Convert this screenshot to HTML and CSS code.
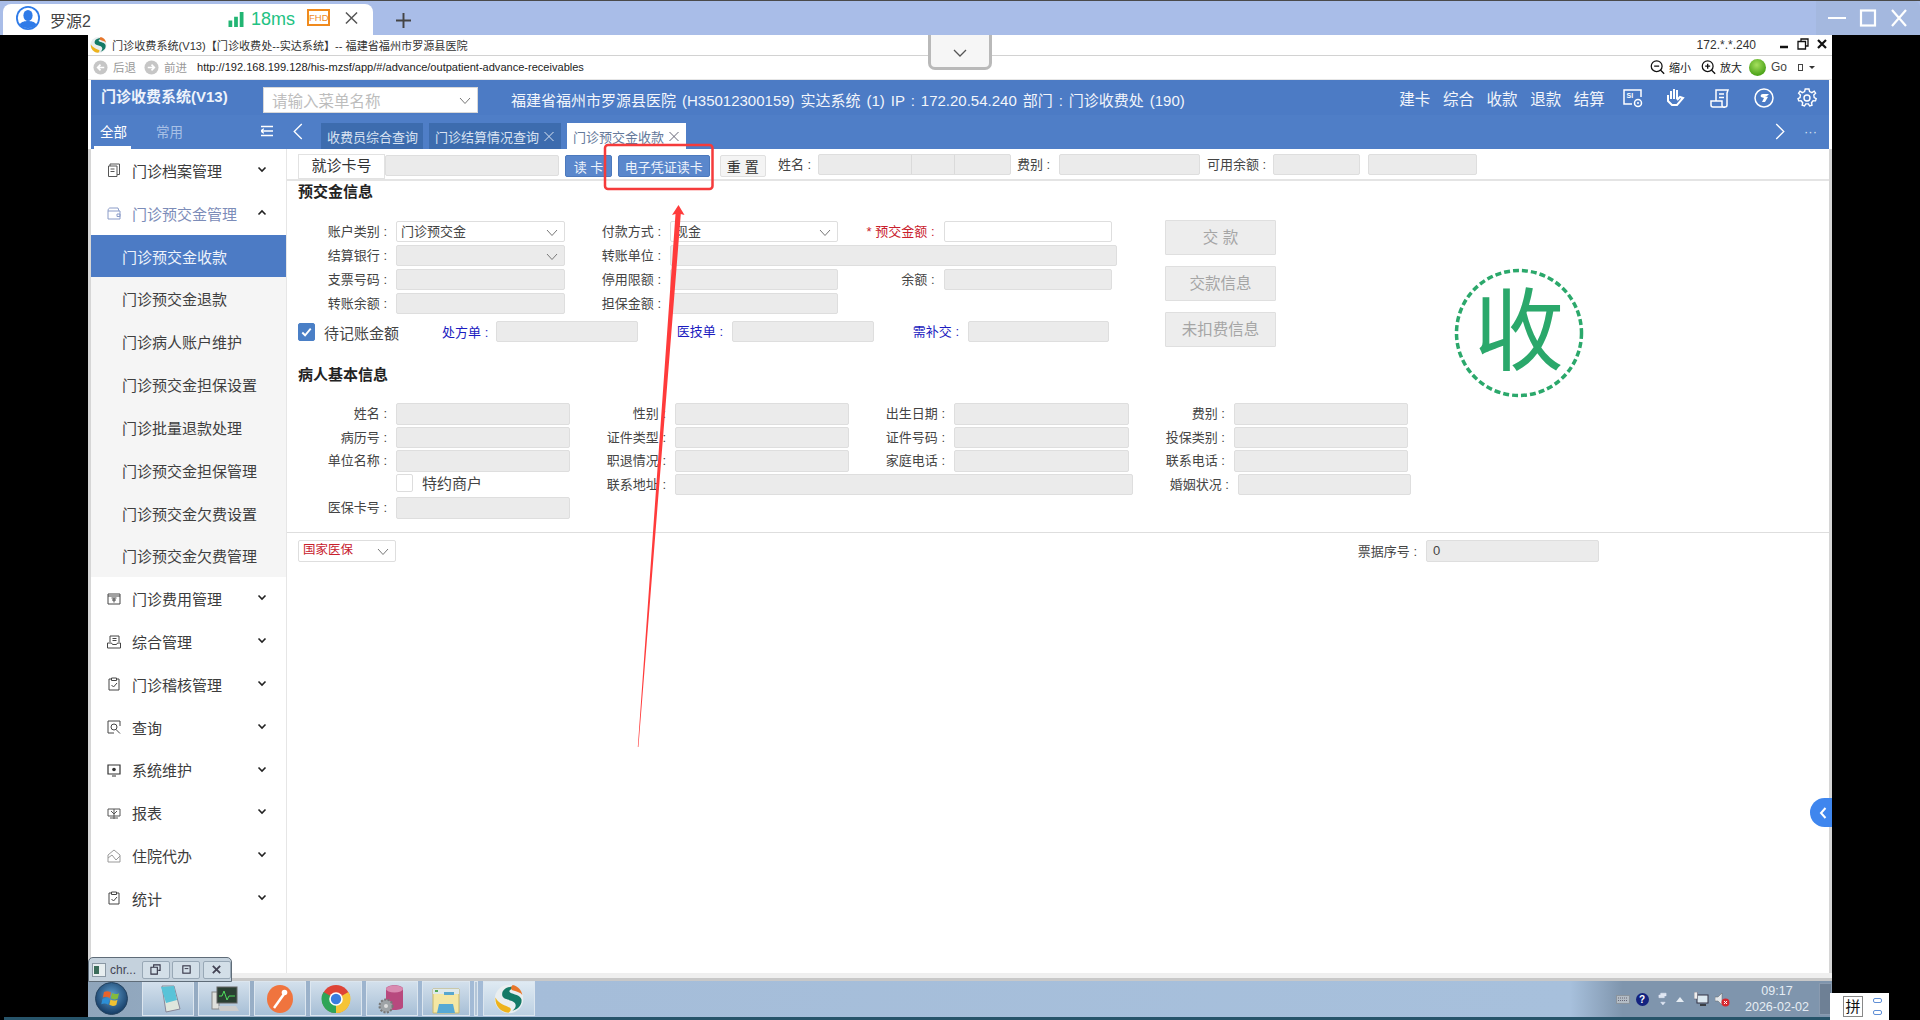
FILE: index.html
```html
<!DOCTYPE html>
<html lang="zh-CN">
<head>
<meta charset="utf-8">
<title>门诊预交金收款</title>
<link rel="stylesheet" href="styles.css">
</head>
<body>
<svg width="0" height="0" class="defs">
  <symbol id="logo" viewBox="0 0 20 20">
    <circle cx="10" cy="10" r="9.5" fill="#e9eef0"/>
    <path d="M15 1.800C9 1 4.500 4 5.600 8c.8 2.600 6.600 2.400 8.300 4.600 1.200 1.600.4 3.800-1.600 5.200 4-1 6.600-4 6-7.600-.6-3-5.400-3.200-7.600-4.600C9.200 4.600 11.500 3 15 1.800z" fill="#147a66"/>
    <path d="M12.500.6c3.600.8 6 3.600 6.400 6.800-1.200-1.800-3.800-2.200-6-3C11 3.800 11 2 12.500.6z" fill="#e8762a"/>
    <path d="M1 9c-.6 4.800 3 9.800 8.600 10.200 1.600-1 2-2.200 1.200-3.200C8 14.200 3 13.400 1 9z" fill="#eeb31c"/>
  </symbol>
  <symbol id="chev" viewBox="0 0 12 8"><path d="M1 1l5 5.500L11 1" fill="none" stroke="currentColor" stroke-width="1"/></symbol>
  <symbol id="mchev" viewBox="0 0 10 7"><path d="M1.500 1.500L5 5l3.500-3.500" fill="none" stroke="currentColor" stroke-width="1.600"/></symbol>
  <radialGradient id="orb-bg" cx="50%" cy="40%" r="60%"><stop offset="0" stop-color="#5f9fcf"/><stop offset="1" stop-color="#143a63"/></radialGradient>
</svg>

<header class="top-bar">
  <div class="conn-tab">
    <svg class="avatar" viewBox="0 0 24 24"><circle cx="12" cy="12" r="12" fill="#2f7be8"/><circle cx="12" cy="12" r="10.200" fill="#fff"/><ellipse cx="12" cy="9.500" rx="4.600" ry="5.600" fill="#2f7be8"/><path d="M3.500 18.500c2-3 5.500-3.500 8.500-3.500s6.500.5 8.500 3.500A10.200 10.200 0 0 1 12 22a10.200 10.200 0 0 1-8.500-3.500z" fill="#2f7be8"/></svg>
    <span class="conn-name">罗源2</span>
    <svg class="signal" viewBox="0 0 16 16"><path d="M0 9h4v7H0zM6 5h4v11H6zM12 0h4v16h-4z" fill="#22b573"/></svg>
    <span class="conn-ms">18ms</span>
    <span class="conn-fhd">FHD</span>
    <svg class="conn-close" viewBox="0 0 14 14"><path d="M1 1l12 12M13 1L1 13" stroke="#555" stroke-width="1.600"/></svg>
  </div>
  <svg class="conn-add" viewBox="0 0 14 14"><path d="M7 0v14M0 7h14" stroke="#444" stroke-width="1.800"/></svg>
  <div class="win-ctl">
    <svg viewBox="0 0 18 18"><path d="M0 9h18" stroke="#fff" stroke-width="2"/></svg>
    <svg viewBox="0 0 18 18"><rect x="2" y="1.500" width="14" height="15" fill="none" stroke="#fff" stroke-width="2.200"/></svg>
    <svg viewBox="0 0 18 18"><path d="M2 1l14 16M16 1L2 17" stroke="#fff" stroke-width="2.200"/></svg>
  </div>
</header>

<div class="stage">
  <div class="win">
    <div class="titlebar">
      <svg class="favicon"><use href="#logo"/></svg>
      <span class="title-text">门诊收费系统(V13)【门诊收费处--实达系统】-- 福建省福州市罗源县医院</span>
      <span class="title-ip">172.*.*.240</span>
      <svg class="tb-ctl" viewBox="0 0 12 12"><path d="M2 9h8" stroke="#111" stroke-width="2.500"/></svg>
      <svg class="tb-ctl" viewBox="0 0 12 12"><path d="M4 3V1h7v7H9M1 3.500h7.500V11H1z" fill="none" stroke="#111" stroke-width="1.300"/></svg>
      <svg class="tb-ctl" viewBox="0 0 12 12"><path d="M2 2l8 8M10 2l-8 8" stroke="#111" stroke-width="2.200"/></svg>
    </div>
    <div class="addrbar">
      <svg class="nav-round" viewBox="0 0 16 16"><circle cx="8" cy="8" r="7.500" fill="#c6c6c6"/><path d="M12 8H5M8 5L5 8l3 3" fill="none" stroke="#fff" stroke-width="1.800"/></svg>
      <span class="nav-label">后退</span>
      <svg class="nav-round nav-next" viewBox="0 0 16 16"><circle cx="8" cy="8" r="7.500" fill="#c6c6c6"/><path d="M4 8h7M8 5l3 3-3 3" fill="none" stroke="#fff" stroke-width="1.800"/></svg>
      <span class="nav-label">前进</span>
      <span class="url">http://192.168.199.128/his-mzsf/app/#/advance/outpatient-advance-receivables</span>
      <div class="zoom-tools">
        <svg class="zoom-ico" viewBox="0 0 18 18"><circle cx="8" cy="8" r="6.500" fill="none" stroke="#111" stroke-width="1.500"/><path d="M5 8h6M12.500 12.500L17 17" stroke="#111" stroke-width="1.600"/></svg>
        <span class="zoom-text">缩小</span>
        <svg class="zoom-ico zoom-gap" viewBox="0 0 18 18"><circle cx="8" cy="8" r="6.500" fill="none" stroke="#111" stroke-width="1.500"/><path d="M5 8h6M8 5v6M12.500 12.500L17 17" stroke="#111" stroke-width="1.600"/></svg>
        <span class="zoom-text">放大</span>
        <span class="go-dot"></span>
        <span class="go-text">Go</span>
        <span class="go-square"></span>
        <span class="go-caret"></span>
      </div>
    </div>

    <div class="app">
      <div class="app-head">
        <div class="brand">门诊收费系统(V13)</div>
        <div class="menu-search"><span>请输入菜单名称</span><svg class="chev-s"><use href="#chev"/></svg></div>
        <div class="app-info">福建省福州市罗源县医院 (H35012300159) 实达系统 (1) IP : 172.20.54.240 部门 : 门诊收费处 (190)</div>
        <nav class="quick">
          <span class="quick-cell">建卡</span>
          <span class="quick-cell">综合</span>
          <span class="quick-cell">收款</span>
          <span class="quick-cell">退款</span>
          <span class="quick-cell">结算</span>
          <span class="quick-cell"><svg class="quick-ico" viewBox="0 0 20 20"><path d="M18 9V2H1v14h8" fill="none" stroke="#fff" stroke-width="1.500"/><text x="3.500" y="10" class="si-text">SI</text><circle cx="15" cy="15" r="3.500" fill="none" stroke="#fff" stroke-width="1.500"/><circle cx="15" cy="15" r="1" fill="#fff"/></svg></span>
          <span class="quick-cell"><svg class="quick-ico" viewBox="0 0 20 20"><path d="M5 3v8M8 1v10M11 2v9M2 7v6l4 4h5l6-7-3-1-3 3" fill="none" stroke="#fff" stroke-width="2"/></svg></span>
          <span class="quick-cell"><svg class="quick-ico" viewBox="0 0 20 20"><path d="M6 13V2h12l-1 3v12a2 2 0 0 1-2 2H3a2 2 0 0 1-2-2v-4h11v4a2 2 0 0 0 3 2M9 6h5M9 9.500h5" fill="none" stroke="#fff" stroke-width="1.500"/></svg></span>
          <span class="quick-cell"><svg class="quick-ico" viewBox="0 0 20 20"><circle cx="10" cy="10" r="9" fill="none" stroke="#fff" stroke-width="1.500"/><path d="M15 6H9C7 6 6 7.500 7 9l3 1-2 4h3l3-5-3-1h2z" fill="#fff"/></svg></span>
          <span class="quick-cell"><svg class="quick-ico" viewBox="0 0 20 20"><path d="M10 1l2 0 .6 2.600 2.300 1 2.300-1.400 1.400 2-1.800 1.900.4 2.500 2 1-.7 2.300-2.400-.1-1.600 1.900.5 2.500-2.300.8-1.300-2.100h-2.600L7.500 18l-2.300-.8.500-2.500-1.600-1.900-2.400.1L1 10.600l2-1 .4-2.500L1.600 5.200l1.400-2 2.300 1.400 2.300-1L8.200 1z" fill="none" stroke="#fff" stroke-width="1.400"/><circle cx="10" cy="10" r="3" fill="none" stroke="#fff" stroke-width="1.400"/></svg></span>
        </nav>
      </div>
      <div class="app-tabs">
        <div class="side-tabs">
          <span class="side-tab side-tab-on">全部</span>
          <span class="side-tab">常用</span>
          <svg class="side-burger" viewBox="0 0 12 12"><path d="M0 1.500h12M3 6h9M0 10.500h12M0 6l2-1.500v3z" stroke="#fff" stroke-width="1.500" fill="#fff"/></svg>
        </div>
        <svg class="tab-arrow tab-prev" viewBox="0 0 10 18"><path d="M9 1L1 9l8 8" fill="none" stroke="#fff" stroke-width="1.400"/></svg>
        <div class="tabs">
          <span class="tab">收费员综合查询</span>
          <span class="tab">门诊结算情况查询<svg class="tab-x" viewBox="0 0 10 10"><path d="M.5.500l9 9M9.500.500l-9 9" stroke="#d7e1f0" stroke-width="1"/></svg></span>
          <span class="tab tab-on">门诊预交金收款<svg class="tab-x" viewBox="0 0 10 10"><path d="M.5.500l9 9M9.500.500l-9 9" stroke="#667" stroke-width="1"/></svg></span>
        </div>
        <svg class="tab-arrow tab-next" viewBox="0 0 10 18"><path d="M1 1l8 8-8 8" fill="none" stroke="#fff" stroke-width="1.400"/></svg>
        <span class="tab-more">···</span>
      </div>
      <div class="app-main">
        <aside class="side">
          <div class="m-item"><svg class="m-ico" viewBox="0 0 14 14"><path d="M3 3V1h9.500v10.500H10M1.500 3H10v10.500H1.500zM3.500 6h4M3.500 8.500h4" fill="none" stroke="#555" stroke-width="1"/></svg><span>门诊档案管理</span><svg class="m-chev"><use href="#mchev"/></svg></div>
          <div class="m-item m-open"><svg class="m-ico" viewBox="0 0 14 14"><path d="M1 5c0-2 1-3 2-3h8l1 3M1 5h12v8H1zM10 8h3v2.500h-3z" fill="none" stroke="#8b9cc8" stroke-width="1"/></svg><span>门诊预交金管理</span><svg class="m-chev m-up"><use href="#mchev"/></svg></div>
          <div class="sub">
            <div class="s-item s-on">门诊预交金收款</div>
            <div class="s-item">门诊预交金退款</div>
            <div class="s-item">门诊病人账户维护</div>
            <div class="s-item">门诊预交金担保设置</div>
            <div class="s-item">门诊批量退款处理</div>
            <div class="s-item">门诊预交金担保管理</div>
            <div class="s-item">门诊预交金欠费设置</div>
            <div class="s-item">门诊预交金欠费管理</div>
          </div>
          <div class="m-item"><svg class="m-ico" viewBox="0 0 14 14"><path d="M1 2h12v10H1zM1 4h12M4.500 6h5M7 6v4.500M5 8h4" fill="none" stroke="#444" stroke-width="1"/></svg><span>门诊费用管理</span><svg class="m-chev"><use href="#mchev"/></svg></div>
          <div class="m-item"><svg class="m-ico" viewBox="0 0 14 14"><path d="M3 7V1h9v6M.5 8h4l1 1.500h4L10.500 8h3v5h-13zM5.500 3.500h4M5.500 5.500h4" fill="none" stroke="#444" stroke-width="1"/></svg><span>综合管理</span><svg class="m-chev"><use href="#mchev"/></svg></div>
          <div class="m-item"><svg class="m-ico" viewBox="0 0 14 14"><path d="M4 2H2v11h10V2h-2M4.500 1h5v2.500h-5zM4.500 8l2 2 3.500-4" fill="none" stroke="#444" stroke-width="1"/></svg><span>门诊稽核管理</span><svg class="m-chev"><use href="#mchev"/></svg></div>
          <div class="m-item"><svg class="m-ico" viewBox="0 0 14 14"><path d="M13 6V1H1v12h6" fill="none" stroke="#444" stroke-width="1"/><circle cx="7" cy="7" r="3" fill="none" stroke="#444"/><path d="M9 9.500l4 4" stroke="#444"/></svg><span>查询</span><svg class="m-chev"><use href="#mchev"/></svg></div>
          <div class="m-item"><svg class="m-ico" viewBox="0 0 14 14"><path d="M1 2h12v9H1zM5 13h4" fill="none" stroke="#333" stroke-width="1.200"/><circle cx="7" cy="6.500" r="1.800" fill="#333"/></svg><span>系统维护</span><svg class="m-chev"><use href="#mchev"/></svg></div>
          <div class="m-item"><svg class="m-ico" viewBox="0 0 14 14"><path d="M1 3h12v7H1zM4 5l3 3 3-3M7 3v10M3 12h8" fill="none" stroke="#555" stroke-width="1"/></svg><span>报表</span><svg class="m-chev"><use href="#mchev"/></svg></div>
          <div class="m-item"><svg class="m-ico" viewBox="0 0 14 14"><path d="M1 13V6l6-5 6 5v7zM1 9l4-3 4 5 4-4" fill="none" stroke="#999" stroke-width="1"/></svg><span>住院代办</span><svg class="m-chev"><use href="#mchev"/></svg></div>
          <div class="m-item"><svg class="m-ico" viewBox="0 0 14 14"><path d="M4 2H2v11h10V2h-2M4.500 1h5v2.500h-5zM4.500 8l2 2 3.500-4" fill="none" stroke="#444" stroke-width="1"/></svg><span>统计</span><svg class="m-chev"><use href="#mchev"/></svg></div>
        </aside>
        <main class="content">
          <div class="toolbar">
            <span class="card-label">就诊卡号</span>
            <span class="field card-input"></span>
            <button class="btn btn-blue btn-read">读 卡</button>
            <button class="btn btn-blue btn-ecard">电子凭证读卡</button>
            <button class="btn btn-reset">重 置</button>
            <span class="tb-label tb-name">姓名 :</span>
            <span class="field name-field"><i class="seg seg-a"></i><i class="seg seg-b"></i><i class="seg seg-c"></i></span>
            <span class="tb-label tb-fee">费别 :</span>
            <span class="field fee-field"></span>
            <span class="tb-label tb-bal">可用余额 :</span>
            <span class="field bal-a"></span>
            <span class="field bal-b"></span>
          </div>

          <section class="pay">
            <div class="pay-left">
              <h2 class="sec-title">预交金信息</h2>
              <div class="grid-pay">
                <label class="lab">账户类别 :</label>
                <div class="field field-on sel">门诊预交金<svg class="chev-s"><use href="#chev"/></svg></div>
                <label class="lab">付款方式 :</label>
                <div class="field field-on sel">现金<svg class="chev-s"><use href="#chev"/></svg></div>
                <label class="lab lab-req">* 预交金额 :</label>
                <div class="field field-on"></div>

                <label class="lab">结算银行 :</label>
                <div class="field sel"><svg class="chev-s"><use href="#chev"/></svg></div>
                <label class="lab">转账单位 :</label>
                <div class="field span-wide"></div>

                <label class="lab">支票号码 :</label>
                <div class="field"></div>
                <label class="lab">停用限额 :</label>
                <div class="field"></div>
                <label class="lab">余额 :</label>
                <div class="field"></div>

                <label class="lab">转账余额 :</label>
                <div class="field"></div>
                <label class="lab">担保金额 :</label>
                <div class="field"></div>
              </div>
              <div class="grid-due">
                <div class="chk-cell"><span class="chk chk-on"><svg viewBox="0 0 16 16"><path d="M3.500 8.500l3 3 6-7" fill="none" stroke="#fff" stroke-width="2"/></svg></span><span class="chk-text">待记账金额</span><label class="lab lab-link lab-rx">处方单 :</label></div>
                <div class="field"></div>
                <label class="lab lab-link">医技单 :</label>
                <div class="field"></div>
                <label class="lab lab-link">需补交 :</label>
                <div class="field"></div>
              </div>
            </div>
            <div class="pay-btns">
              <button class="btn-off">交 款</button>
              <button class="btn-off">交款信息</button>
              <button class="btn-off">未扣费信息</button>
            </div>
            <svg class="stamp" viewBox="0 0 130 130"><circle cx="65" cy="65" r="62.500" fill="none" stroke="#2ba86b" stroke-width="3.500" stroke-dasharray="6 3"/><text x="65" y="95" class="stamp-text">收</text></svg>
          </section>

          <section class="patient">
            <h2 class="sec-title">病人基本信息</h2>
            <div class="grid-patient">
              <label class="lab">姓名 :</label><div class="field"></div>
              <label class="lab">性别 :</label><div class="field"></div>
              <label class="lab">出生日期 :</label><div class="field"></div>
              <label class="lab">费别 :</label><div class="field"></div>

              <label class="lab">病历号 :</label><div class="field"></div>
              <label class="lab">证件类型 :</label><div class="field"></div>
              <label class="lab">证件号码 :</label><div class="field"></div>
              <label class="lab">投保类别 :</label><div class="field"></div>

              <label class="lab">单位名称 :</label><div class="field"></div>
              <label class="lab">职退情况 :</label><div class="field"></div>
              <label class="lab">家庭电话 :</label><div class="field"></div>
              <label class="lab">联系电话 :</label><div class="field"></div>

              <span></span>
              <div class="chk-cell chk-merchant"><span class="chk"></span><span class="chk-text">特约商户</span></div>
              <label class="lab">联系地址 :</label>
              <div class="field span-addr"></div>
              <label class="lab lab-marry">婚姻状况 :</label>
              <div class="field field-marry"></div>

              <label class="lab">医保卡号 :</label><div class="field"></div>
            </div>
          </section>

          <section class="foot">
            <div class="field field-on sel sel-nat">国家医保<svg class="chev-s"><use href="#chev"/></svg></div>
            <label class="lab lab-bill">票据序号 :</label>
            <div class="field field-bill">0</div>
          </section>
        </main>
      </div>
    </div>

    <div class="band"></div>
    <footer class="taskbar">
      <svg class="orb" viewBox="0 0 33 33"><circle cx="16.500" cy="16.500" r="16" fill="url(#orb-bg)" stroke="#24425f"/><path d="M9 10c2.500-1.200 4.500-1 7 .5l-1.200 5.500c-2.400-1.400-4.400-1.600-7-.5z" fill="#e8632b"/><path d="M17 11c2.500 1.400 4.500 1.400 7 .2l-1.200 5.300c-2.500 1.200-4.500 1.200-7-.2z" fill="#84bb3d"/><path d="M7.500 16.800c2.600-1.100 4.500-.9 7 .5l-1.200 5.400c-2.400-1.400-4.400-1.600-7-.5z" fill="#2c8fd6"/><path d="M15.500 17.500c2.500 1.400 4.500 1.400 7 .2l-1.200 5.300c-2.500 1.200-4.500 1.200-7-.2z" fill="#f0c232"/></svg>
      <div class="t-btn"><svg viewBox="0 0 30 30"><path d="M9 2h12l6 23-14 3z" fill="#dfe6dd" stroke="#889"/><path d="M8 3l13-1 3 14-11 3z" fill="#59c3d8"/></svg></div>
      <div class="t-btn"><svg viewBox="0 0 30 30"><rect x="3" y="8" width="7" height="17" fill="#dfe0dc" stroke="#888"/><rect x="8" y="3" width="20" height="16" fill="#2a3f33" stroke="#666"/><path d="M10 12h3l2-5 3 9 2-4h6" fill="none" stroke="#4fdc5c"/><path d="M9 22h18l3 5H11z" fill="#ccc"/></svg></div>
      <div class="t-btn"><svg viewBox="0 0 30 30"><ellipse cx="15" cy="15" rx="13" ry="14" fill="#f0743e"/><path d="M9 24L19 10" stroke="#fff" stroke-width="2.500"/><circle cx="19.500" cy="8.500" r="2.800" fill="#fff"/></svg></div>
      <div class="t-btn"><svg viewBox="0 0 30 30"><circle cx="15" cy="15" r="14" fill="#de4437"/><path d="M15 15L27.500 8A14 14 0 0 1 15 29z" fill="#f6c437"/><path d="M15 15L15 29A14 14 0 0 1 2.500 8z" fill="#2fa557"/><circle cx="15" cy="15" r="6.800" fill="#fff"/><circle cx="15" cy="15" r="5.200" fill="#3b7de0"/></svg></div>
      <div class="t-btn"><svg viewBox="0 0 30 30"><path d="M9 5c0-5 17-5 17 0v18c0 4-17 4-17 0z" fill="#b8497e"/><ellipse cx="17.500" cy="5" rx="8.500" ry="3.500" fill="#d98ab0"/><circle cx="9" cy="22" r="6.500" fill="#9ea3a6" stroke="#777" stroke-dasharray="2 1.500" stroke-width="2"/><circle cx="9" cy="22" r="2" fill="#ddd"/></svg></div>
      <div class="t-btn t-last"><svg viewBox="0 0 30 30"><path d="M2 5h26v24H2z" fill="#f4e7a4" stroke="#c8b76c"/><path d="M2 5h26v5H2z" fill="#dfe9ea"/><path d="M4 6h3v2H4z" fill="#5a5"/><path d="M13 8h10v3H13z" fill="#58a7cf"/><path d="M8 20h14l2 9H6z" fill="#57a9d4"/></svg></div>
      <div class="t-sep"></div>
      <div class="t-btn t-active"><svg><use href="#logo"/></svg></div>
      <div class="tray">
        <svg class="tr-kbd" viewBox="0 0 14 10"><rect x=".5" y="1.500" width="13" height="8" fill="#b3bcc5" stroke="#8b949d"/><path d="M2 4h10M2 6.500h10" stroke="#667" stroke-dasharray="1 1"/></svg>
        <span class="tr-help">?</span>
        <svg class="tr-win" viewBox="0 0 10 16"><path d="M1 3h6v3H1zM3 3V1h6v3H7M3 11h5l-2.500 3z" fill="#dce6f0" stroke="#eef" stroke-width=".5"/></svg>
        <svg class="tr-up" viewBox="0 0 8 5"><path d="M4 0l4 5H0z" fill="#e4ebf2"/></svg>
        <svg class="tr-net" viewBox="0 0 15 15"><rect x="3" y="3" width="11" height="8" fill="#dbe8f0" stroke="#334"/><path d="M6 13h6" stroke="#222" stroke-width="1.500"/><rect x="0" y="0" width="3.500" height="7" fill="#eee" stroke="#667" stroke-width=".6"/></svg>
        <svg class="tr-vol" viewBox="0 0 15 15"><path d="M0 5h3l4-4v12l-4-4H0z" fill="#e4e8ec" stroke="#666" stroke-width=".5"/><circle cx="10.500" cy="10.500" r="4" fill="#d7272f"/><path d="M9 9l3 3M12 9l-3 3" stroke="#fff"/></svg>
        <div class="clock"><span>09:17</span><span>2026-02-02</span></div>
        <div class="show-desk"></div>
      </div>
    </footer>
  </div>
</div>

<div class="conn-popup">
  <svg class="pop-ico" viewBox="0 0 14 14"><rect x=".5" y=".5" width="13" height="13" fill="#e7eef0" stroke="#8a98a4"/><rect x="2" y="3" width="5" height="8" fill="#3b6c5a"/></svg>
  <span class="pop-text">chr...</span>
  <span class="pop-btn"><svg viewBox="0 0 12 12"><path d="M4 3V1h7v6H9M1 3.500h7V11H1z" fill="none" stroke="#334" stroke-width="1.200"/></svg></span>
  <span class="pop-btn"><svg viewBox="0 0 12 12"><rect x="2" y="2" width="8" height="8" fill="none" stroke="#334" stroke-width="1.200"/><path d="M4 5h4" stroke="#334"/></svg></span>
  <span class="pop-btn"><svg viewBox="0 0 12 12"><path d="M2 2l8 8M10 2l-8 8" stroke="#445" stroke-width="2"/></svg></span>
</div>
<div class="drop-handle"><svg viewBox="0 0 14 8"><path d="M1 1l6 6 6-6" fill="none" stroke="#555" stroke-width="1.300"/></svg></div>
<div class="side-toggle"><svg viewBox="0 0 8 12"><path d="M6.500 1L2 6l4.500 5" fill="none" stroke="#fff" stroke-width="2"/></svg></div>
<div class="ime"><span class="ime-key">拼</span><span class="ime-dots"><i></i><i></i></span></div>

<svg class="annot" viewBox="0 0 1920 1020">
  <rect x="605" y="145" width="107.500" height="44" rx="3" fill="none" stroke="#f53b3b" stroke-width="2.500"/>
  <polygon points="678.500,205 684.500,215 680.800,214 638.400,747 637.800,747 675.500,214 672,215" fill="#ff3b3b"/>
</svg>
</body>
</html>
```

FILE: styles.css
```css
* { box-sizing: border-box; }
html, body { margin: 0; padding: 0; }
body {
  width: 1920px;
  height: 1020px;
  overflow: hidden;
  background: #000;
  color: #333;
  font-family: "Liberation Sans", "Noto Sans CJK SC", sans-serif;
  font-size: 13px;
  position: relative;
}
.defs { position: absolute; }
svg { display: block; flex: none; }

/* remote client top bar */
.top-bar {
  height: 35px;
  background: #a9bde8;
  border-top: 1px solid #4a4a4a;
  display: flex;
  align-items: flex-end;
  padding-left: 3px;
}
.conn-tab {
  width: 370px;
  height: 31px;
  background: #fff;
  border-radius: 8px 8px 0 0;
  display: flex;
  align-items: center;
  padding-left: 13px;
}
.avatar { width: 24px; height: 24px; margin-top: -3px; }
.conn-name { font-size: 16px; margin-left: 10px; width: 39px; color: #444; white-space: nowrap; }
.signal { width: 16px; height: 15px; margin-left: 139px; margin-top: -1px; }
.conn-ms { font-size: 18px; color: #22c283; margin-left: 7px; width: 41px; }
.conn-fhd {
  margin-left: 15px;
  width: 23px;
  height: 17px;
  border: 2px solid #f08a1d;
  color: #f08a1d;
  font-size: 9.500px;
  line-height: 13px;
  text-align: center;
  margin-top: -4px;
}
.conn-close { width: 13px; height: 14px; margin-left: 15px; margin-top: -3px; }
.conn-add { width: 15px; height: 15px; margin-left: 23px; margin-bottom: 7px; }
.win-ctl {
  margin-left: auto;
  width: 104px;
  height: 34px;
  background: #a4b8df;
  display: flex;
  align-items: center;
  justify-content: space-around;
  padding: 0 6px;
  border-radius: 0 6px 0 0;
}
.win-ctl svg { width: 18px; height: 18px; }

/* remote window */
.stage { padding-left: 88px; height: 985px; }
.stage::before {
  content: "";
  position: absolute;
  left: 4px;
  bottom: 0;
  width: 84px;
  height: 3px;
  background: #27546a;
}
.win { width: 1744px; height: 985px; background: #fff; display: flex; flex-direction: column; }
.titlebar {
  height: 21px;
  flex: none;
  border-bottom: 1px solid #d2d2d2;
  display: flex;
  align-items: center;
  padding: 0 4px 0 2px;
}
.favicon { width: 17px; height: 18px; }
.title-text { font-size: 11.100px; margin-left: 5px; color: #333; white-space: nowrap; }
.title-ip { font-size: 12px; margin-left: auto; margin-right: 15px; color: #333; }
.tb-ctl { width: 12px; height: 12px; margin-left: 7px; margin-top: -2px; }

.addrbar {
  height: 24px;
  flex: none;
  display: flex;
  align-items: center;
  padding: 0 17px 1px 5px;
  border-bottom: 1px solid #e6e6e6;
}
.nav-round { width: 15px; height: 15px; }
.nav-next { margin-left: 9px; }
.nav-label { font-size: 11.500px; color: #999; margin-left: 5px; width: 22px; white-space: nowrap; }
.url { font-size: 11.050px; color: #222; margin-left: 11px; white-space: nowrap; }
.zoom-tools { margin-left: auto; display: flex; align-items: center; }
.zoom-ico { width: 15px; height: 16px; }
.zoom-gap { margin-left: 10px; }
.zoom-text { font-size: 11px; margin-left: 4px; color: #222; white-space: nowrap; }
.go-dot {
  width: 17px;
  height: 17px;
  margin-left: 7px;
  border-radius: 50%;
  background: radial-gradient(circle at 45% 35%, #a6e05e, #4ea41a 70%);
}
.go-text { font-size: 12px; color: #444; margin-left: 5px; }
.go-square { width: 5px; height: 7px; border: 1px solid #444; margin-left: 11px; }
.go-caret { border: 3px solid transparent; border-top: 3px solid #333; border-bottom: 0; margin-left: 6px; }

.drop-handle {
  position: absolute;
  left: 928px;
  top: 35px;
  width: 64px;
  height: 35px;
  background: #f6f6f6;
  border: 3px solid #b9b9b9;
  border-top: 0;
  border-radius: 0 0 7px 7px;
  display: flex;
  align-items: center;
  justify-content: center;
}
.drop-handle svg { width: 14px; height: 8px; margin-top: 3px; }

.app { flex: none; height: 893px; margin: 0 3px; display: flex; flex-direction: column; position: relative; }
.app-head {
  height: 35px;
  flex: none;
  background: #4c7bc5;
  display: flex;
  align-items: center;
  color: #fff;
  padding-left: 10px;
  padding-top: 1px;
}
.brand { width: 131px; font-size: 15px; font-weight: bold; white-space: nowrap; margin-top: -5px; color: #eef3fb; }
.menu-search {
  width: 215px;
  height: 26px;
  margin-left: 31px;
  margin-top: 3px;
  background: #fff;
  border: 1px solid #d8d8d8;
  color: #bdbdbd;
  font-size: 15.500px;
  padding-left: 8px;
  display: flex;
  align-items: center;
  position: relative;
}
.chev-s { width: 12px; height: 8px; color: #777; position: absolute; right: 6px; top: 50%; margin-top: -3px; }
.app-info { margin-left: 33px; font-size: 15px; word-spacing: 1.800px; white-space: nowrap; margin-top: 3px; color: #f2f5fb; }
.quick { margin-left: auto; display: flex; }
.quick-cell {
  width: 43.600px;
  font-size: 15.500px;
  display: flex;
  justify-content: center;
  align-items: center;
  color: #f2f5fb;
  margin-top: -1px;
}
.quick-ico { width: 20px; height: 20px; }
.si-text { font-size: 7px; font-weight: bold; fill: #fff; }

.app-tabs { height: 34px; flex: none; background: #4f7ec7; display: flex; align-items: flex-end; position: relative; }
.side-tabs { width: 195px; height: 34px; display: flex; align-items: center; position: relative; flex: none; }
.side-tab { font-size: 13.500px; color: #a8c0e6; margin-left: 29px; margin-top: -3px; white-space: nowrap; }
.side-tab:first-child { margin-left: 9px; }
.side-tab-on { color: #fff; position: relative; }
.side-tab-on::after {
  content: "";
  position: absolute;
  left: -6px;
  right: -4px;
  top: 25px;
  height: 3px;
  background: #fff;
}
.side-burger { width: 12px; height: 12px; margin-left: 78px; margin-top: -3px; }
.tab-arrow { width: 10px; height: 17px; }
.tab-prev { margin: 0 0 9px 7px; }
.tab-next { margin: 0 0 9px auto; }
.tabs { display: flex; margin-left: 18px; }
.tab {
  height: 26px;
  background: #3d6cae;
  color: #d9e3f2;
  font-size: 13px;
  display: flex;
  align-items: center;
  padding: 0 6px;
  margin-right: 6px;
  white-space: nowrap;
}
.tab:nth-child(1) { width: 102px; }
.tab:nth-child(2) { width: 132px; }
.tab-on { width: 119px; background: #fff; color: #65799a; }
.tab-x { width: 10px; height: 11px; margin-left: 5px; }
.tab-more { color: #d6e0f0; font-size: 13px; margin: 0 12px 10px 19px; }

.app-main {
  flex: 1;
  display: flex;
  min-height: 0;
  background: #fff;
  box-shadow: -3px 0 0 #d6d6d6, 3px 0 0 #d6d6d6;
}
.side { width: 196px; flex: none; border-right: 1px solid #e6e6e6; }
.m-item {
  height: 42.800px;
  display: flex;
  align-items: center;
  padding-left: 16px;
  font-size: 15px;
  color: #3c3c3c;
  position: relative;
  white-space: nowrap;
}
.m-ico { width: 14px; height: 14px; margin-right: 11px; }
.m-chev { width: 10px; height: 7px; position: absolute; left: 166px; top: 17px; color: #222; }
.m-up { transform: rotate(180deg); }
.m-open { color: #7c8cb8; }
.sub { background: #f5f5f5; }
.s-item {
  height: 42.850px;
  display: flex;
  align-items: center;
  padding-left: 31px;
  font-size: 15px;
  color: #3f3f3f;
  white-space: nowrap;
}
.s-on { background: #4c7bc5; color: #eef3fb; }

.content { flex: 1; min-width: 0; }
.toolbar {
  height: 32px;
  border-bottom: 2px solid #e4e4e4;
  display: flex;
  align-items: flex-start;
  padding: 5px 0 0 11px;
}
.field {
  display: block;
  height: 21px;
  background: #ebebeb;
  border: 1px solid #dedede;
  border-radius: 2px;
  position: relative;
  font-size: 13px;
  line-height: 19px;
  padding-left: 4px;
  color: #444;
  flex: none;
}
.field-on { background: #fff; }
.card-label {
  width: 87px;
  height: 25px;
  border: 1px solid #e2e2e2;
  font-size: 15px;
  text-align: center;
  line-height: 22px;
  color: #333;
  background: #fff;
}
.card-input { width: 174px; margin-top: 1px; }
.btn {
  height: 22px;
  border-radius: 2px;
  font: inherit;
  padding: 0;
  margin-top: 1px;
  flex: none;
  cursor: default;
}
.btn-blue { background: #5a87cc; border: 1px solid #4c79bd; color: #eef3fb; font-size: 13px; }
.btn-read { width: 47px; margin-left: 6px; }
.btn-ecard { width: 91.500px; margin-left: 6px; }
.btn-reset { width: 46.500px; margin-left: 10px; background: #f4f4f4; border: 1px solid #e0e0e0; color: #333; font-size: 14px; }
.tb-label { font-size: 13px; white-space: nowrap; color: #444; line-height: 21px; }
.tb-name { margin-left: 12px; width: 40px; }
.name-field { width: 193px; display: flex; padding: 0; }
.seg { display: block; height: 100%; border-right: 1px solid #dadada; }
.seg-a { width: 92.500px; }
.seg-b { width: 43px; }
.seg-c { flex: 1; border: 0; }
.tb-fee { margin-left: 6px; width: 42px; }
.fee-field { width: 141px; }
.tb-bal { margin-left: 7px; width: 66px; }
.bal-a { width: 87px; }
.bal-b { width: 109px; margin-left: 8px; }

.sec-title { font-size: 15px; font-weight: bold; color: #222; margin: 0; padding-left: 11px; height: 22px; line-height: 22px; }
.lab { font-size: 13px; color: #444; text-align: right; line-height: 21px; white-space: nowrap; margin-right: 9px; }
.lab-req { color: #c9202c; }
.lab-link { color: #1c1cc0; }
.lab-rx { margin: 0 0 0 43px; }

.pay { display: flex; height: 183px; align-items: flex-start; }
.pay-left { width: 825px; flex: none; }
.grid-pay {
  display: grid;
  grid-template-columns: 109px 168.500px 105.500px 168px 105.500px 168px;
  grid-auto-rows: 24px;
  margin-top: 18px;
}
.grid-pay .field, .grid-patient .field { align-self: start; }
.span-wide { grid-column: span 3; width: 447px; }
.sel { position: relative; }
.grid-due {
  display: grid;
  grid-template-columns: 209px 142px 94px 142px 94px 141px;
  height: 22px;
  margin-top: 4px;
}
.chk-cell { display: flex; align-items: center; padding-left: 11px; white-space: nowrap; }
.chk {
  width: 17px;
  height: 18px;
  border: 1px solid #ddd;
  border-radius: 2px;
  background: #fff;
  flex: none;
}
.chk-on { background: #4a7fc6; border-color: #4a7fc6; }
.chk-on svg { width: 15px; height: 16px; }
.chk-text { font-size: 15px; margin-left: 9px; color: #444; white-space: nowrap; }
.pay-btns { margin-left: 53px; margin-top: 39px; display: flex; flex-direction: column; gap: 11px; flex: none; }
.btn-off {
  width: 111px;
  height: 35px;
  background: #ededed;
  border: 1px solid #dfdfdf;
  border-radius: 1px;
  color: #a5a5a5;
  font: inherit;
  font-size: 15.500px;
  padding: 0 0 4px;
}
.stamp { width: 130px; height: 130px; margin: 87px 0 0 178px; }
.stamp-text { font-size: 90px; fill: #2ba86b; text-anchor: middle; }

.patient { height: 168px; margin-top: 0; }
.grid-patient {
  display: grid;
  grid-template-columns: 109px 174px 105px 174px 105px 174.600px 105.400px 174px;
  grid-auto-rows: 23.600px;
  margin-top: 17px;
}
.grid-patient .field { height: 21.500px; }
.chk-merchant { padding-left: 0; align-items: flex-start; }
.chk-merchant .chk-text { margin-left: 9px; line-height: 20px; }
.span-addr { grid-column: span 3; width: 457.500px; }
.lab-marry { margin-right: 5px; }
.field-marry { margin-left: 4px; width: 173px; }

.foot {
  border-top: 1px solid #dedede;
  padding: 7px 0 0 11px;
  display: flex;
  align-items: flex-start;
}
.sel-nat { width: 97.500px; height: 22px; color: #c7202c; font-size: 12.500px; }
.lab-bill { width: 1021.500px; flex: none; line-height: 24px; }
.field-bill { width: 173px; height: 22px; padding-left: 6px; }

.band { height: 8px; flex: none; background: linear-gradient(#efefef 0 5px, #c8c8c8 5px 100%); }
.taskbar {
  height: 39px;
  flex: none;
  border-bottom: 3px solid #27546a;
  background: linear-gradient(90deg, #8fa5bb 0, #a5bdd9 25%, #a7c0dc 85%, #7f95ad 88%, #7f95ad 100%);
  display: flex;
  padding-left: 53.500px;
  position: relative;
}
.orb { position: absolute; left: 7px; top: 1px; width: 33px; height: 33px; }
.t-btn {
  width: 52.500px;
  height: 35px;
  margin-right: 3.600px;
  background: linear-gradient(#d3e0ec, #a7bfd6);
  border: 1px solid #dce6ef;
  display: flex;
  align-items: center;
  justify-content: center;
  flex: none;
}
.t-last { width: 48px; }
.t-btn svg { width: 30px; height: 30px; }
.t-active { background: linear-gradient(#dfeaf3, #bcd0e2); }
.t-sep { width: 4px; height: 35px; margin-right: 5px; background: #b4c6d8; border: 1px solid #dce6ef; flex: none; }
.tray { margin-left: auto; display: flex; align-items: center; height: 36px; position: relative; }
.tr-kbd { width: 14px; height: 10px; }
.tr-help {
  width: 13px;
  height: 13px;
  margin-left: 6px;
  border-radius: 50%;
  background: #13227f;
  color: #fff;
  font-size: 10px;
  font-weight: bold;
  text-align: center;
  line-height: 13px;
}
.tr-win { width: 9px; height: 15px; margin-left: 9px; }
.tr-up { width: 8px; height: 5px; margin-left: 9px; }
.tr-net { width: 15px; height: 15px; margin-left: 10.500px; }
.tr-vol { width: 15px; height: 15px; margin-left: 6px; }
.clock {
  width: 72px;
  margin-left: 11px;
  display: flex;
  flex-direction: column;
  align-items: center;
  color: #e6edf4;
  font-size: 12.500px;
  line-height: 16px;
}
.show-desk { width: 13px; height: 32px; margin-left: 6px; background: #6e8095; border: 1px solid #8a9bb0; }

/* overlays */
.conn-popup {
  position: absolute;
  left: 88px;
  top: 957px;
  width: 144px;
  height: 25px;
  background: #c5d2dd;
  border: 1px solid #5f6c78;
  border-radius: 5px 5px 0 0;
  display: flex;
  align-items: center;
  padding-left: 3px;
}
.pop-ico { width: 14px; height: 14px; }
.pop-text { font-size: 12px; margin-left: 4px; width: 29px; color: #445; white-space: nowrap; }
.pop-btn {
  width: 28px;
  height: 18px;
  border: 1px solid #98a8b6;
  border-radius: 2px;
  margin-left: 2.500px;
  background: #d3dfe8;
  display: flex;
  align-items: center;
  justify-content: center;
}
.pop-btn svg { width: 11px; height: 11px; }
.side-toggle {
  position: absolute;
  left: 1810px;
  top: 798px;
  width: 22px;
  height: 29px;
  background: #3f86ee;
  border-radius: 15px 0 0 15px;
  display: flex;
  align-items: center;
  padding-left: 9px;
}
.side-toggle svg { width: 8px; height: 12px; }
.ime {
  position: absolute;
  left: 1830px;
  top: 993px;
  width: 59px;
  height: 27px;
  background: #fff;
  display: flex;
  align-items: center;
  padding-left: 13px;
}
.ime-key {
  width: 20px;
  height: 21px;
  border: 1px solid #888;
  font-size: 15px;
  line-height: 19px;
  text-align: center;
  color: #111;
}
.ime-dots { display: flex; flex-direction: column; gap: 7px; margin-left: 10px; }
.ime-dots i { display: block; width: 9px; height: 5px; border: 1.500px solid #5f8fd6; border-radius: 2px; }
.annot { position: absolute; left: 0; top: 0; width: 1920px; height: 1020px; pointer-events: none; }
```
